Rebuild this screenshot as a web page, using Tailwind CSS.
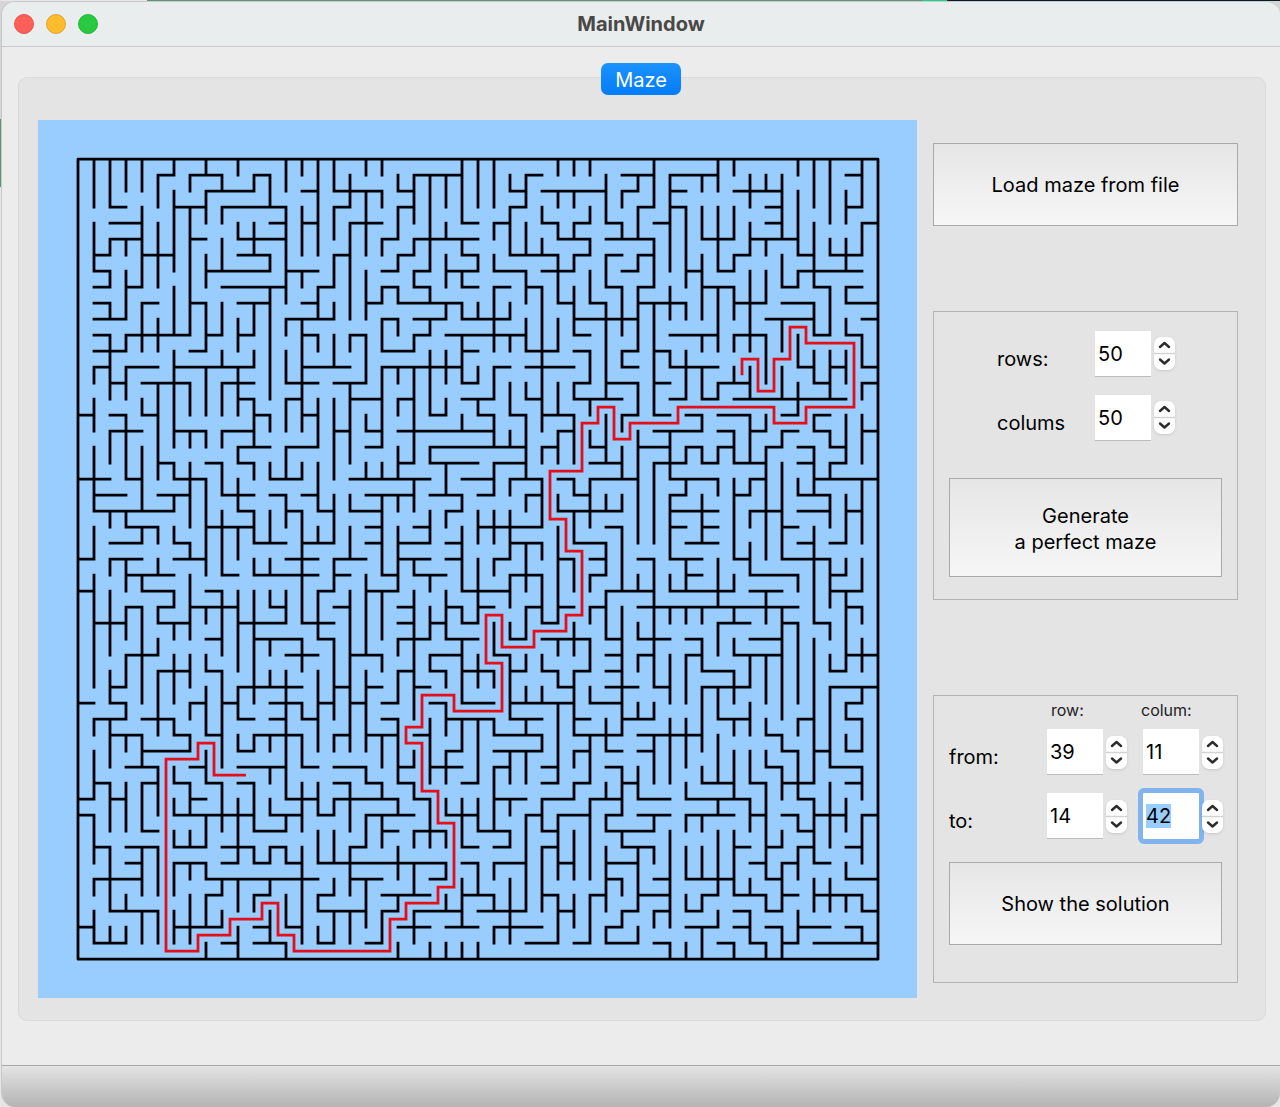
<!DOCTYPE html>
<html lang="en">
<head>
<meta charset="utf-8">
<meta name="viewport" content="width=device-width, initial-scale=1">
<title>MainWindow</title>
<script src="https://cdn.jsdelivr.net/npm/@tailwindcss/browser@4"></script>
</head>
<body class="min-h-screen bg-[#e9e9e9] font-[Inter,sans-serif] text-xl text-black">
<svg class="hidden" aria-hidden="true">
  <symbol id="stepper" viewBox="0 0 21 33">
    <path d="M0 16.5H21" stroke="#d2d2d2" stroke-width="1.5"/>
    <path d="M6 10L10.5 6L15 10M6 22.5L10.5 26.5L15 22.5" fill="none" stroke="#2c2c2c" stroke-width="2.4" stroke-linecap="round" stroke-linejoin="round"/>
  </symbol>
</svg>
<div class="flex min-h-screen flex-col bg-[linear-gradient(90deg,#e8e8e8_147px,#5d9478_147px,#5d9478_922px,#12d68c_922px,#12d68c_947px,#0b1a26_947px)] pt-px">
<div class="flex grow flex-col bg-[linear-gradient(180deg,#d5d5d5_118px,#5d9478_118px,#5d9478_186px,#e6e6e6_186px)] pl-px">
<main class="flex grow flex-col overflow-hidden rounded-[14px] border-l border-t border-[#c8c8c8] bg-[#ececec]">
  <header class="relative flex h-[45px] shrink-0 items-center border-b border-[#cbcbcd] bg-[#e9eded] px-3">
    <div class="flex gap-3">
      <button aria-label="Close" class="size-5 rounded-full border border-[#ea5148] bg-[#fc5f57]"></button>
      <button aria-label="Minimize" class="size-5 rounded-full border border-[#dfa32c] bg-[#fdbb2e]"></button>
      <button aria-label="Zoom" class="size-5 rounded-full border border-[#20b837] bg-[#28c840]"></button>
    </div>
    <h1 class="grow pr-[84px] text-center text-xl font-bold text-[#484848]">MainWindow</h1>
  </header>

  <div class="flex grow flex-col pl-4 pr-[14px] pt-4">
    <div role="tablist" class="z-10 -mb-[18px] flex justify-center pr-[2px]">
      <button role="tab" aria-selected="true" class="h-8 w-20 rounded-[7px] bg-linear-to-b from-[#1a93fd] to-[#047bf8] pt-px text-white">Maze</button>
    </div>
    <div class="flex gap-4 rounded-[9px] border border-[#d9d9d9] bg-[#e4e4e4] pb-[22px] pl-[19px] pr-[27px] pt-[42px]">
      <div class="min-w-0 grow bg-[#99ccff]">
        <svg viewBox="0 0 879 878" class="w-full" role="img" aria-label="Maze with solution">
          <g transform="translate(40 39.2)" fill="none" stroke-width="2.8">
            <path id="walls" stroke="#000" stroke-linecap="square" stroke-linejoin="round"/>
            <path id="route" stroke="#e40f18"/>
          </g>
        </svg>
      </div>

      <div class="flex w-[305px] shrink-0 flex-col pt-[23px]">
        <button class="h-[83px] border border-[#a9a9a9] bg-linear-to-b from-[#e6e6e6] to-[#f6f6f6] pt-px">Load maze from file</button>

        <form class="mt-[85px] flex h-[289px] flex-col border border-[#b3b3b3] px-[15px] pt-[19px]">
          <div class="grid grid-cols-[98px_81px] gap-y-[18px] pl-12">
            <label for="rows" class="pt-[14px]">rows:</label>
            <div class="flex items-center gap-[3px]">
              <input id="rows" value="50" inputmode="numeric" class="h-[46px] w-14 border-b border-[#bcbcbc] bg-white px-[3px]">
              <svg class="mb-[2px] h-[33px] w-[21px] rounded-[7px] bg-white shadow" aria-hidden="true"><use href="#stepper"/></svg>
            </div>
            <label for="cols" class="pt-[14px]">colums</label>
            <div class="flex items-center gap-[3px]">
              <input id="cols" value="50" inputmode="numeric" class="h-[46px] w-14 border-b border-[#bcbcbc] bg-white px-[3px]">
              <svg class="mb-[2px] h-[33px] w-[21px] rounded-[7px] bg-white shadow" aria-hidden="true"><use href="#stepper"/></svg>
            </div>
          </div>
          <button type="button" class="mt-[37px] h-[99px] border border-[#a9a9a9] bg-linear-to-b from-[#e6e6e6] to-[#f6f6f6] pt-[2px] leading-[26px]">Generate<br>a perfect maze</button>
        </form>

        <form class="mt-[95px] flex h-[288px] flex-col border border-[#b3b3b3] px-[15px] pt-[3px]">
          <div class="grid grid-cols-[102px_90px_auto] text-base leading-[22px] text-[#222]">
            <span></span><span>row:</span><span>colum:</span>
          </div>
          <div class="mt-2 grid grid-cols-[98px_96px_81px] gap-y-[18px]">
            <label for="from-row" class="pt-[14px]">from:</label>
            <div class="flex items-center gap-[3px]">
              <input id="from-row" value="39" inputmode="numeric" class="h-[46px] w-14 border-b border-[#bcbcbc] bg-white px-[3px]">
              <svg class="h-[33px] w-[21px] rounded-[7px] bg-white shadow" aria-hidden="true"><use href="#stepper"/></svg>
            </div>
            <div class="flex items-center gap-[3px]">
              <input aria-label="from column" value="11" inputmode="numeric" class="h-[46px] w-14 border-b border-[#bcbcbc] bg-white px-[3px]">
              <svg class="h-[33px] w-[21px] rounded-[7px] bg-white shadow" aria-hidden="true"><use href="#stepper"/></svg>
            </div>
            <label for="to-row" class="pt-[14px]">to:</label>
            <div class="flex items-center gap-[3px]">
              <input id="to-row" value="14" inputmode="numeric" class="h-[46px] w-14 border-b border-[#bcbcbc] bg-white px-[3px]">
              <svg class="h-[33px] w-[21px] rounded-[7px] bg-white shadow" aria-hidden="true"><use href="#stepper"/></svg>
            </div>
            <div class="flex items-center gap-[3px]">
              <input id="to-col" aria-label="to column" value="42" inputmode="numeric" class="h-[46px] w-14 rounded-[1px] bg-white px-[3px] outline-[5px] outline-[#81b3ee] selection:bg-[#99ccff] selection:text-black">
              <svg class="h-[33px] w-[21px] rounded-[7px] bg-white shadow" aria-hidden="true"><use href="#stepper"/></svg>
            </div>
          </div>
          <button type="button" class="mt-[23px] h-[83px] border border-[#a9a9a9] bg-linear-to-b from-[#e6e6e6] to-[#f6f6f6] pt-px">Show the solution</button>
        </form>
      </div>
    </div>
  </div>
  <footer class="h-[42px] shrink-0 border-t border-[#a8a8a8] bg-linear-to-b from-[#e4e4e4] to-[#b4b4b4]"></footer>
</main>
</div>
</div>
<script>
// Walls are stored in blocks of 17 x 17 cells. In each block, "v" lists the
// vertical walls of grid line 0, 1, 2 ... as start/end pairs, and "h" the horizontal ones.
const blocks = [
{x:0,y:0,
v:"|0 3 4 7 13 14 15 17|0 3 5 6 7 8 9 10 11 15|0 2 5 6 7 10 11 12 13 15 16 17|0 2 3 8 9 12 15 16|1 3 4 8 10 12 14 17|0 1 2 7 8 11 12 17|1 2 3 11 14 16|0 1 2 4 6 8 9 12 13 16|1 2 3 4 5 7 9 11 12 13 14 16|0 1 4 5 10 12 13 16|1 2 4 6 9 11 12 13 15 17|1 3 6 7 8 15 16 17|0 2 3 9 10 11 12 14 15 17|0 1 3 6 7 8 10 17|0 6 8 10 11 12 15 17|0 2 3 5 6 8 9 10 11 13 15 17",
h:"|5 6 7 9 11 12|8 11 14 15 16 17|2 3 6 8 9 13 16 17|2 4 12 13 14 15|2 4 7 8 10 13|1 2 4 6 10 12 16 17|1 2 8 12 13 15|1 2 3 4 9 13 15 16|1 2 4 5 7 8 10 12 14 15|1 3 13 16|1 2 3 7 8 9 10 11 14 15|1 3 7 8|1 2 3 5 6 11 14 17|2 3 4 7 9 11 13 15 16 17|10 11 13 14|0 1 2 3 4 5 11 12 14 15"},
{x:17,y:0,
v:"1 3 4 10 11 12 14 17|0 1 2 6 7 10 11 14 16 17|0 1 2 3 5 6 8 9 10 12 13 17|1 2 3 5 6 7 8 9 10 11 13 14 15 16|1 4 5 6 7 8 11 12 13 17|1 7 8 9 10 11 12 16|1 3 4 5 6 8 9 10 12 14 15 16|0 4 5 6 7 8 9 10 11 14 16 17|0 3 6 7 9 10 13 14 15 16|0 3 4 5 6 7 8 12 13 15 16 17|1 2 3 6 9 10 11 12 14 16|1 3 4 6 7 9 10 12 14 15 16 17|3 4 5 6 8 17|0 1 2 3 4 5 6 9 10 12 14 16|0 1 2 3 4 5 6 7 8 11 14 15 16 17|0 1 3 4 5 6 7 9 12 14 15 16|1 4 6 8 9 15 16 17",
h:"|4 7 11 12|-1 2 3 4 10 11 12 16|3 4 10 11|0 2 7 8 9 10 12 13 14 15 16 17|2 3 4 8 13 15 16 17|3 4 7 8 10 13 14 15 16 17|2 3 4 5 6 8 9 11 12 14|2 3 4 5 7 8 9 10 11 12 16 17|1 2 3 7 13 14 15 16|2 3 4 6 7 10 14 17|0 1 4 5 6 11 14 15|2 4 7 8 11 13 14 15|2 7 9 10 11 14|-1 1 7 8 14 15 16 17|0 2 3 4 7 9 11 12 14 17|5 6 8 9 10 11 12 14"},
{x:34,y:0,
v:"2 3 4 5 8 11 12 13 16 17|1 2 3 5 6 7 8 12 14 16|0 3 5 8 9 16|1 7 8 10 12 13|3 8 9 10 12 15|1 2 3 5 6 10 11 12 13 15 16 17|0 2 3 7 8 12 14 15|0 1 3 5 6 7 8 10 11 12 13 14|1 3 4 6 7 12 13 15 16 17|1 2 5 6 7 9 11 14 16 17|1 5 6 8 10 12 13 15|0 1 2 6 7 8 11 13 14 16|0 3 4 8 9 11 12 14 16 17|0 4 5 6 8 11 12 15|2 4 5 7 8 9 10 11 12 14 16 17|0 3 4 6 11 13 14 15 16 17",
h:"|0 2 3 6 14 15|0 1 3 4 7 10|1 2 3 4 9 10 14 15|-1 0 2 3 9 10 15 16|-1 2 5 7 8 11|-1 0 1 2 7 8 11 12 13 15|0 1 4 5 6 7 11 15|-1 0 1 2 5 7 10 11 12 13 14 15|1 4 7 9 10 12 14 16|-1 1 9 12 15 16|3 6 7 9 12 13 14 15|0 1 2 3|0 1 3 6 11 12 13 14 15 16|-1 1 2 3 6 8 12 13 15 16|-1 0 3 4 5 6 7 14|0 1 2 3 4 5 6 8 10 11 12 13"},
{x:0,y:17,
v:"|-1 0 1 5 6 8 9 16|0 2 5 6 8 9 10 14 15 17|-1 3 5 6 8 10 11 13 14 16|1 5 6 7 9 10 11 17|-1 3 6 7 8 9 11 12 13 14 15 17|-1 1 2 3 4 5 6 7 10 11 12 13 14 17|0 1 2 6 7 8 9 13 14 16|0 1 3 9 11 12 14 15 16 17|0 1 2 4 5 9 10 14 15 17|1 2 3 5 6 8 10 15 16 17|-1 1 2 3 5 7 8 9 10 17|-1 0 2 3 5 7 8 9 10 11 13 14 15 16|-1 0 1 3 4 6 10 12 15 17|-1 0 2 3 5 12 13 15|-1 1 2 5 6 7 10 13 15 17|-1 3 4 7 8 10 13 17",
h:"2 4 6 8 9 11 16 17|10 12 13 15|5 6 8 9 10 11|0 2 3 4 6 8 12 14|1 3 5 7 9 11 12 13 14 15|1 6 10 11 13 14 15 16|3 5 8 11|2 4 6 7 11 13 14 16|0 1 2 4 6 8 13 15 16 17|3 6 9 10 11 15 16 17|0 1 4 6 8 9 15 16|3 4 5 6 7 10 12 13 16 17|1 3 5 7 10 13 14 16|8 9 11 14 15 16|3 5 13 15|5 7 8 9|2 3 10 14 16 17"},
{x:17,y:17,
v:"-1 2 4 5 6 8 10 17|-1 0 2 3 9 14 15 17|-1 1 2 3 4 9 10 13 14 15|1 3 4 5 6 10 13 14 15 17|-1 2 3 5 8 9 10 17|1 2 5 7 9 10 11 13 14 15|2 4 5 6 10 13 15 16|-1 0 4 5 6 10 11 12 13 17|5 7 8 12 14 16|-1 1 2 4 5 7 8 9 12 14 15 16|0 1 3 4 5 8 9 11 12 13 14 17|-1 3 4 5 7 10 11 13 14 15 16 17|-1 0 1 2 3 6 7 8 9 12 14 15 16 17|0 2 4 5 6 12 13 14 15 16|-1 2 3 4 5 7 8 10 12 14 15 16|0 1 3 6 9 10 11 12 13 15 16 17|-1 2 4 5 7 9 10 13",
h:"-1 0 1 2 3 9 13 14|1 2 5 11 12 13 15 16|3 4 5 8 9 11 15 17|0 5 7 9 10 12 13 14 15 17|1 4 5 7 8 9 11 12 14 15|0 2 6 7 13 17|1 2 4 5 8 12 16 17|1 2 3 5 6 7 10 12 14 16|-1 1 3 5 6 7 9 10 13 14 15 16|-1 0 2 3 4 6 10 12 15 16|1 3 7 10 16 17|-1 0 3 4 6 7 8 9 11 12 13 14 15 16|3 4 5 6 7 8 12 13|3 5 6 8 10 11 12 15 16 17|0 2 5 7 9 10 16 17|3 4 5 6 7 9 10 11 12 13 14 15 16 17|-1 0 1 2 4 5 13 14 16 17"},
{x:34,y:17,
v:"-1 0 1 3 4 5 6 10 11 17|0 7 9 10 12 13 14 15|2 7 8 16|0 3 4 8 9 10 11 12 14 17|1 2 3 4 8 10 11 12 14 17|-1 0 1 2 4 7 11 12 13 15 16 17|1 2 3 4 8 11 12 14 16 17|0 2 3 8 9 10 11 12 13 14 15 17|-1 2 3 4 5 6 7 9 14 16|-1 0 1 8 10 12 14 17|0 1 2 8 11 17|3 4 9 10 12 17|-1 0 1 4 6 12 13 17|0 1 2 3 4 6 8 11 12 13 14 15 16 17|-1 2 4 7 8 9 10 15|-1 2 3 7 8 10 11 12 13 15 16 17",
h:"2 5 6 7 8 9 10 11 12 13 15 16|1 3 4 5 6 7 9 10 11 12 13 14|-1 0 2 4 5 6 7 9 11 12 13 14|-1 1 3 6 8 9 12 16|3 4 7 8 11 13|-1 0 3 6 8 10 11 13 14 15|-1 0 3 4 5 6 10 11|4 6 11 12 13 14|1 2 3 5 7 8 10 13|4 5 8 11 13 14|-1 2 3 7 8 10 13 15|1 11 14 15|6 8 10 11 12 13|-1 0 1 3 4 5 8 10|-1 0 1 2 4 5 7 10 14 16|-1 0 5 7 13 14|-1 1 2 3 5 8 13 16"},
{x:0,y:34,
v:"|1 2 3 6 7 10 11 12 13 15|-1 0 1 4 5 8 9 13 14 15|0 1 2 3 5 8 12 13 14 15|-1 0 2 4 5 8 9 12 13 15|-1 2 4 7 9 12 13 15|-1 0 1 2 4 5 6 7 8 9 10 12 13 15|0 1 2 3 5 7 8 9 10 11 12 15|-1 2 3 5 7 9 10 11 12 14 15 16|-1 4 5 8 11 12 13 14|-1 1 2 3 6 10 11 13 14 16|-1 0 2 3 5 8 9 10 12 13|2 3 4 5 6 7 9 10 11 12 13 15|-1 6 7 8 9 10 12 14 15 16|0 1 2 4 5 8 9 15|-1 3 5 7 8 10 12 13 14 15|-1 1 2 3 6 7 8 10 11 12 13 15",
h:"0 1 2 3 7 8 9 10 12 14 15 16|1 3 4 6 10 11 12 13 14 15|2 4 6 7 8 9 11 14 16 17|4 7 10 11|3 5 7 8 10 13 14 15 16 17|1 2 4 5 6 7 8 9 10 11 16 17|0 1 2 3 7 8 13 15 16 17|0 1 6 11 12 14 15 16|4 5 11 13|1 2 3 5 6 8 9 11 12 13|3 4 6 8 9 10 11 12 13 14 15 17|1 4 8 15|8 9 11 12 15 16|2 5 15 17|0 1 6 9 11 12 13 14|1 3 9 10 11 13 15 16"},
{x:17,y:34,
v:"-1 3 5 8 9 12 13 15|-1 3 4 5 7 9 11 14|2 4 5 6 7 9 13 15|-1 0 1 5 6 7 9 11 12 13 15 16|-1 1 3 4 5 6 8 9 10 12 13 15|1 5 6 9 15 16|0 2 3 5 6 7 8 9 10 11 12 13 15 16|-1 0 1 3 6 9 11 14 15 16|1 5 6 8 10 12 15 16|1 2 4 8 10 11 12 13 14 15|-1 1 3 5 6 7 8 9 11 15|-1 0 1 2 3 5 7 13|-1 0 2 3 6 8 9 13|0 5 7 11 12 15|-1 2 3 4 5 6 8 11 12 14|-1 0 2 5 6 11 12 15|1 3 5 6 7 8 9 13 14 15",
h:"0 1 2 3 5 6 7 9 10 14 15 17|2 3 6 9 10 12 14 15|-1 0 1 3 4 5 9 12 14 17|6 7 9 12 14 15 16 17|-1 1 3 4 5 7 9 10 12 13 16 17|-1 0 1 2 3 4 7 8 12 13 14 15|-1 3 4 5 9 11 12 14 15 17|1 4 6 8 11 12 13 15 16 17|2 3 4 6 8 10 12 13 16 17|0 1 7 8 9 10 12 13|-1 6 7 8 9 11 13 14 16 17|0 2 5 6 16 17|2 5 7 9 12 13 15 16|-1 1 2 3 4 7 8 11 13 14|3 5 6 8 9 12 16 17|1 2 11 13 14 15 16 17"},
{x:34,y:34,
v:"-1 2 4 7 8 9 11 12 13 14|0 1 4 6 9 13 14 15|0 1 2 5 7 8 9 10 13 14|-1 0 1 5 8 14 15 16|-1 0 1 4 5 6 7 8 9 11 12 13 15 16|-1 3 4 5 7 8 9 11 12 13 14 16|-1 1 2 5 6 7 8 12 13 14|-1 0 1 2 3 6 8 12 15 16|0 2 3 5 6 8 11 12 13 15|-1 0 1 2 3 4 5 11 12 13 15 16|-1 1 2 3 4 6 8 9 10 13 14 16|-1 0 1 2 3 6 7 8 9 11 13 15|-1 5 6 10 11 13|-1 4 5 9 11 13|0 1 2 3 6 8 10 11 12 13|-1 0 1 3 4 6 7 10 12 13 14 15",
h:"-1 0 14 15|0 2 6 8 11 12 14 15|-1 0 1 5 9 10|-1 0 1 2 10 11 12 13 14 15|-1 0 9 10 13 15|0 1 5 7 8 9 10 12 14 15|-1 0 1 3 4 8 11 12|-1 0 1 3 4 7 8 9 10 11 12 14 15 16|-1 2 11 12|0 2 7 8 9 10 11 12 14 15|-1 1 8 9 10 11 12 13|-1 0 2 3 4 7 9 10 14 16|1 3 5 6 7 9 10 11 12 15|0 1 2 3 4 5 7 8 9 10 15 16|-1 0 4 6 7 8 9 10 11 13 14 15|-1 1 2 3 6 7 8 9 10 11 12 16"}
];
const CELL = 16;
let d = "M0 0H800V800H0Z";
for (const b of blocks) {
  for (const dir of ["v", "h"]) {
    b[dir].split("|").forEach((line, i) => {
      const n = line ? line.split(" ").map(Number) : [];
      for (let k = 0; k + 1 < n.length; k += 2) {
        d += dir === "v"
          ? `M${(b.x + i) * CELL} ${(b.y + n[k]) * CELL}V${(b.y + n[k + 1]) * CELL}`
          : `M${(b.x + n[k]) * CELL} ${(b.y + i) * CELL}H${(b.x + n[k + 1]) * CELL}`;
      }
    });
  }
}
document.getElementById("walls").setAttribute("d", d);

// The solution runs through cell centres: each step names the row or column it goes to.
const route = "M10 38 H8 V36 H7 V37 H5 V49 H7 V48 H9 V47 H11 V46 H12 V48 H13 V49 H19 V47 H20 V46 H22 V45 H23 V41 H22 V39 H21 V36 H20 V35 H21 V33 H23 V34 H26 V31 H25 V28 H26 V30 H28 V29 H30 V28 H31 V24 H30 V22 H29 V19 H31 V16 H32 V15 H33 V17 H34 V16 H37 V15 H43 V16 H45 V15 H48 V11 H45 V10 H44 V12 H43 V14 H42 V12 H41 V13";
document.getElementById("route").setAttribute("d", route.replace(/\d+/g, n => n * CELL + CELL / 2));

const target = document.getElementById("to-col");
target.focus();
target.select();
</script>
</body>
</html>
